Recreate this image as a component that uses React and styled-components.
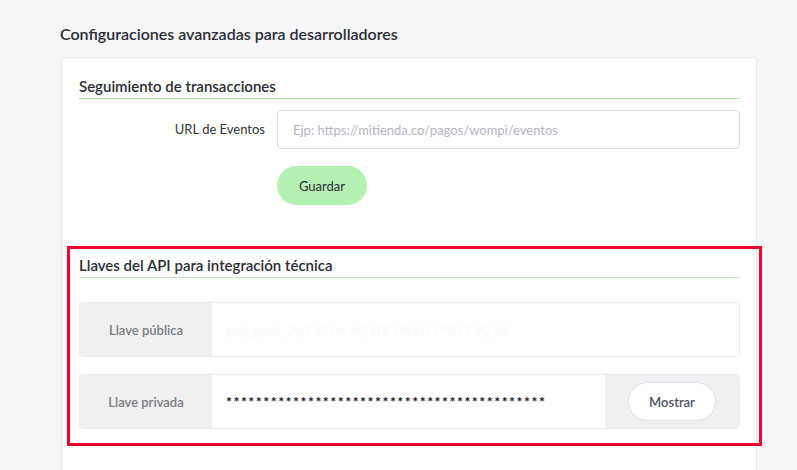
import React from "react";
import styled, { createGlobalStyle } from "styled-components";

const GlobalStyle = createGlobalStyle`
  body {
    margin: 0;
    background: #f6f6f8;
    font-family: Lato, "Noto Sans", sans-serif;
    color: #2b2b33;
    overflow: hidden;
  }
`;

const Page = styled.div`
  padding: 24px 0 0 60px;
  width: 697px;
`;

const PageTitle = styled.h1`
  margin: 0 0 13px;
  font-size: 16px;
  font-weight: 600;
  line-height: 20px;
  color: #2b2d36;
`;

const Card = styled.div`
  margin-left: 1px;
  background: #fff;
  border: 1px solid #e9e9ee;
  border-radius: 4px;
  padding: 18px 16px 40px 17px;
  height: 420px;
  box-sizing: border-box;
`;

const Section = styled.section`
  position: relative;
  margin-top: ${(p) => p.$top || 0}px;
  ${(p) =>
    p.$highlight &&
    `
    &::after {
      content: "";
      position: absolute;
      left: -12px;
      right: -22px;
      top: -9px;
      bottom: -17px;
      border: 3px solid #f2002e;
      pointer-events: none;
    }
  `}
`;

const SectionTitle = styled.h2`
  margin: 0;
  padding-bottom: 2px;
  font-size: 15px;
  font-weight: 600;
  line-height: 20px;
  color: #2b2d36;
  border-bottom: 1px solid ${(p) => p.$line || "#a6eaa0"};
`;

const FormRow = styled.div`
  display: flex;
  align-items: flex-start;
  margin-top: 11px;
`;

const FieldLabel = styled.label`
  width: 198px;
  padding-right: 12px;
  box-sizing: border-box;
  text-align: right;
  font-size: 13px;
  line-height: 16px;
  padding-top: 11px;
  color: #33343c;
`;

const Field = styled.div`
  flex: 1;
  display: flex;
  flex-direction: column;
  gap: 17px;
`;

const TextInput = styled.input`
  height: 39px;
  box-sizing: border-box;
  border: 1px solid #dcdde5;
  border-radius: 4px;
  padding: 0 15px;
  font-family: inherit;
  font-size: 13px;
  outline: none;
  &::placeholder {
    color: #b3b6c2;
  }
`;

const SaveButton = styled.button`
  align-self: flex-start;
  width: 90px;
  height: 39px;
  border: none;
  border-radius: 20px;
  background: #b3f2b0;
  color: #2b2d36;
  font-family: inherit;
  font-size: 13px;
  cursor: pointer;
`;

const KeyList = styled.div`
  display: flex;
  flex-direction: column;
  gap: 17px;
  margin-top: 24px;
`;

const KeyRow = styled.div`
  display: flex;
  height: 55px;
  border: 1px solid #ececf0;
  border-radius: 4px;
  overflow: hidden;
  box-sizing: border-box;
`;

const KeyLabel = styled.div`
  width: 132px;
  flex-shrink: 0;
  background: #f0f0f2;
  display: flex;
  align-items: center;
  justify-content: center;
  font-size: 13px;
  font-weight: 600;
  color: #7c7c84;
`;

const KeyValue = styled.div`
  flex: 1;
  display: flex;
  align-items: center;
  padding-left: 14px;
  background: #fff;
  font-size: ${(p) => (p.$hidden ? "14px" : "13px")};
  font-weight: ${(p) => (p.$hidden ? 700 : 400)};
  color: ${(p) => (p.$hidden ? "#141622" : "#f9fafb")};
  letter-spacing: ${(p) => (p.$hidden ? "1.5px" : "0")};
  white-space: nowrap;
  overflow: hidden;
`;

const KeyAction = styled.div`
  width: 134px;
  flex-shrink: 0;
  background: #f0f0f2;
  display: flex;
  align-items: center;
  justify-content: center;
`;

const GhostButton = styled.button`
  width: 88px;
  height: 39px;
  border: 1px solid #dfe0e8;
  border-radius: 20px;
  background: #fff;
  color: #4d5160;
  font-family: inherit;
  font-size: 13px;
  font-weight: 600;
  cursor: pointer;
`;

export default function App() {
  return (
    <>
      <GlobalStyle />
      <Page>
        <PageTitle>Configuraciones avanzadas para desarrolladores</PageTitle>
        <Card>
          <Section>
            <SectionTitle>Seguimiento de transacciones</SectionTitle>
            <FormRow>
              <FieldLabel>URL de Eventos</FieldLabel>
              <Field>
                <TextInput placeholder="Ejp: https://mitienda.co/pagos/wompi/eventos" />
                <SaveButton>Guardar</SaveButton>
              </Field>
            </FormRow>
          </Section>
          <Section $top={50} $highlight>
            <SectionTitle $line="#c4e8c0">Llaves del API para integración técnica</SectionTitle>
            <KeyList>
              <KeyRow>
                <KeyLabel>Llave pública</KeyLabel>
                <KeyValue>pub_prod_ Ag7  k2Lm   nQ  rT8  vWxYz  PKkL9 fQ  e8</KeyValue>
              </KeyRow>
              <KeyRow>
                <KeyLabel>Llave privada</KeyLabel>
                <KeyValue $hidden>{"*".repeat(43)}</KeyValue>
                <KeyAction>
                  <GhostButton>Mostrar</GhostButton>
                </KeyAction>
              </KeyRow>
            </KeyList>
          </Section>
        </Card>
      </Page>
    </>
  );
}
